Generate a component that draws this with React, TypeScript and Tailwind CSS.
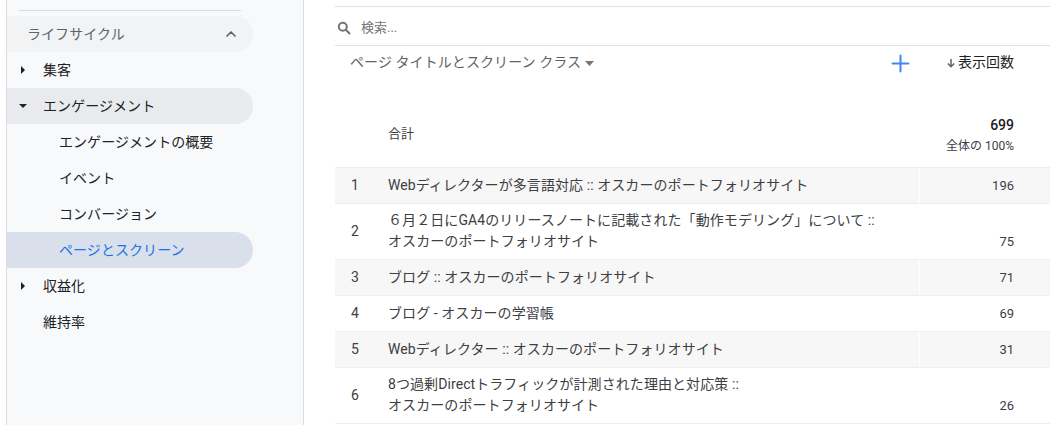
import { ChevronUp, Plus } from "lucide-react";

const font = "font-['Roboto','Noto_Sans_CJK_JP',sans-serif]";

function Caret({ open }: { open?: boolean }) {
  return (
    <svg width="8" height="8" viewBox="0 0 8 8" className="shrink-0 text-[#202124]">
      {open ? <path d="M0 2h8L4 6z" fill="currentColor" /> : <path d="M2 0v8l4-4z" fill="currentColor" />}
    </svg>
  );
}

function NavItem({ label, caret, active }: { label: string; caret?: "open" | "closed"; active?: boolean }) {
  return (
    <div className={`flex h-9 w-[246px] items-center rounded-r-[18px] pl-[12px] ${active ? "bg-[#e8eaed]" : ""}`}>
      <div className="w-[24px]">{caret && <Caret open={caret === "open"} />}</div>
      <span className="text-[14px] tracking-[0.06px] text-[#202124]">{label}</span>
    </div>
  );
}

function SubItem({ label, active }: { label: string; active?: boolean }) {
  return (
    <div className={`flex h-9 w-[246px] items-center rounded-r-[18px] pl-[52px] text-[14px] tracking-[0.06px] ${active ? "bg-[#d9e0eb] text-[#1a73e8]" : "text-[#202124]"}`}>
      {label}
    </div>
  );
}

function Sidebar() {
  return (
    <aside className="ml-[6px] w-[298px] shrink-0 border-x border-[#dadce0] bg-[#f8f9fb]">
      <div className="ml-3 mt-[10px] h-px w-[222px] bg-[#dadce0]" />
      <div className="mt-[5px] flex h-9 w-[246px] items-center justify-between rounded-r-[18px] bg-[#f1f3f4] pl-[20px] pr-[14px]">
        <span className="text-[14px] tracking-[0.06px] text-[#5f6368]">ライフサイクル</span>
        <ChevronUp size={16} strokeWidth={2.5} className="text-[#5f6368]" />
      </div>
      <NavItem label="集客" caret="closed" />
      <NavItem label="エンゲージメント" caret="open" active />
      <SubItem label="エンゲージメントの概要" />
      <SubItem label="イベント" />
      <SubItem label="コンバージョン" />
      <SubItem label="ページとスクリーン" active />
      <NavItem label="収益化" caret="closed" />
      <NavItem label="維持率" />
    </aside>
  );
}

const rows = [
  { n: 1, lines: ["Webディレクターが多言語対応 :: オスカーのポートフォリオサイト"], v: 196 },
  { n: 2, lines: ["６月２日にGA4のリリースノートに記載された「動作モデリング」について ::", "オスカーのポートフォリオサイト"], v: 75 },
  { n: 3, lines: ["ブログ :: オスカーのポートフォリオサイト"], v: 71 },
  { n: 4, lines: ["ブログ - オスカーの学習帳"], v: 69 },
  { n: 5, lines: ["Webディレクター :: オスカーのポートフォリオサイト"], v: 31 },
  { n: 6, lines: ["8つ過剰Directトラフィックが計測された理由と対応策 ::", "オスカーのポートフォリオサイト"], v: 26 },
];

function Row({ n, lines, v, shaded }: { n: number; lines: string[]; v: number; shaded: boolean }) {
  const bg = shaded ? "bg-[#f7f7f7]" : "bg-white";
  const tall = lines.length > 1;
  return (
    <div className={`flex border-b border-[#eeeeee] ${tall ? "h-[56px]" : "h-9"}`}>
      <div className={`flex w-[584px] items-center ${bg}`}>
        <div className={`w-[53px] pl-4 text-[14px] text-[#3c4043] ${tall ? "" : "pb-px"}`}>{n}</div>
        <div className={`text-[14px] leading-[21px] tracking-[0.08px] text-[#3c4043] ${tall ? "pb-[2px]" : "pb-px"}`}>
          {lines.map((line) => (
            <div key={line}>{line}</div>
          ))}
        </div>
      </div>
      <div className={`ml-px flex flex-1 justify-end pr-[36px] text-[13px] text-[#3c4043] ${bg} ${tall ? "items-end pb-[8px]" : "items-center pt-px"}`}>
        {v}
      </div>
    </div>
  );
}

function Report() {
  return (
    <main className="ml-[31px] min-w-0 flex-1">
      <div className="mt-[6px] flex h-[40px] items-center gap-[10px] border-y border-[#e0e0e0] pl-[2px] pt-[3px]">
        <svg width="14" height="14" viewBox="0 0 14 14" fill="none" stroke="#757575" strokeWidth="2">
          <circle cx="5.8" cy="5.8" r="4" />
          <path d="M8.8 8.8 13 13" />
        </svg>
        <span className="text-[13px] text-[#757575]">検索...</span>
      </div>
      <div className="flex h-[46px] items-start">
        <div className="ml-[15px] flex w-[534px] items-center pt-[6px] text-[14px] tracking-[0.08px] text-[#5f6368]">
          ページ タイトルとスクリーン クラス
          <svg width="9" height="5" viewBox="0 0 9 5" className="ml-[4px] mt-[2px]">
            <path d="M0 0h9L4.5 5z" fill="#757575" />
          </svg>
        </div>
        <Plus size={27} strokeWidth={1.8} className="ml-[3px] mt-[4px] text-[#4285f4]" />
        <div className="ml-auto flex items-center pr-[36px] pt-[6px] text-[14px] text-[#202124]">
          <svg width="10" height="10" viewBox="0 0 10 10" fill="none" stroke="#5f6368" strokeWidth="1.5" className="mr-[2px]">
            <path d="M5 1v7.5M1.8 5.5 5 8.7l3.2-3.2" />
          </svg>
          表示回数
        </div>
      </div>
      <div className="flex h-[76px] items-center border-b border-[#eeeeee] pl-[53px] pr-[36px]">
        <span className="pt-[8px] text-[13px] text-[#3c4043]">合計</span>
        <div className="ml-auto pt-[9px] text-right">
          <div className="text-[14px] font-medium leading-5 text-[#202124]">699</div>
          <div className="mt-[3px] text-[12px] leading-4 text-[#3c4043]">全体の 100%</div>
        </div>
      </div>
      {rows.map((r, i) => (
        <Row key={r.n} n={r.n} lines={r.lines} v={r.v} shaded={i % 2 === 0} />
      ))}
    </main>
  );
}

export default function App() {
  return (
    <div className={`flex h-[425px] w-[1050px] overflow-hidden bg-white ${font}`}>
      <Sidebar />
      <Report />
    </div>
  );
}
